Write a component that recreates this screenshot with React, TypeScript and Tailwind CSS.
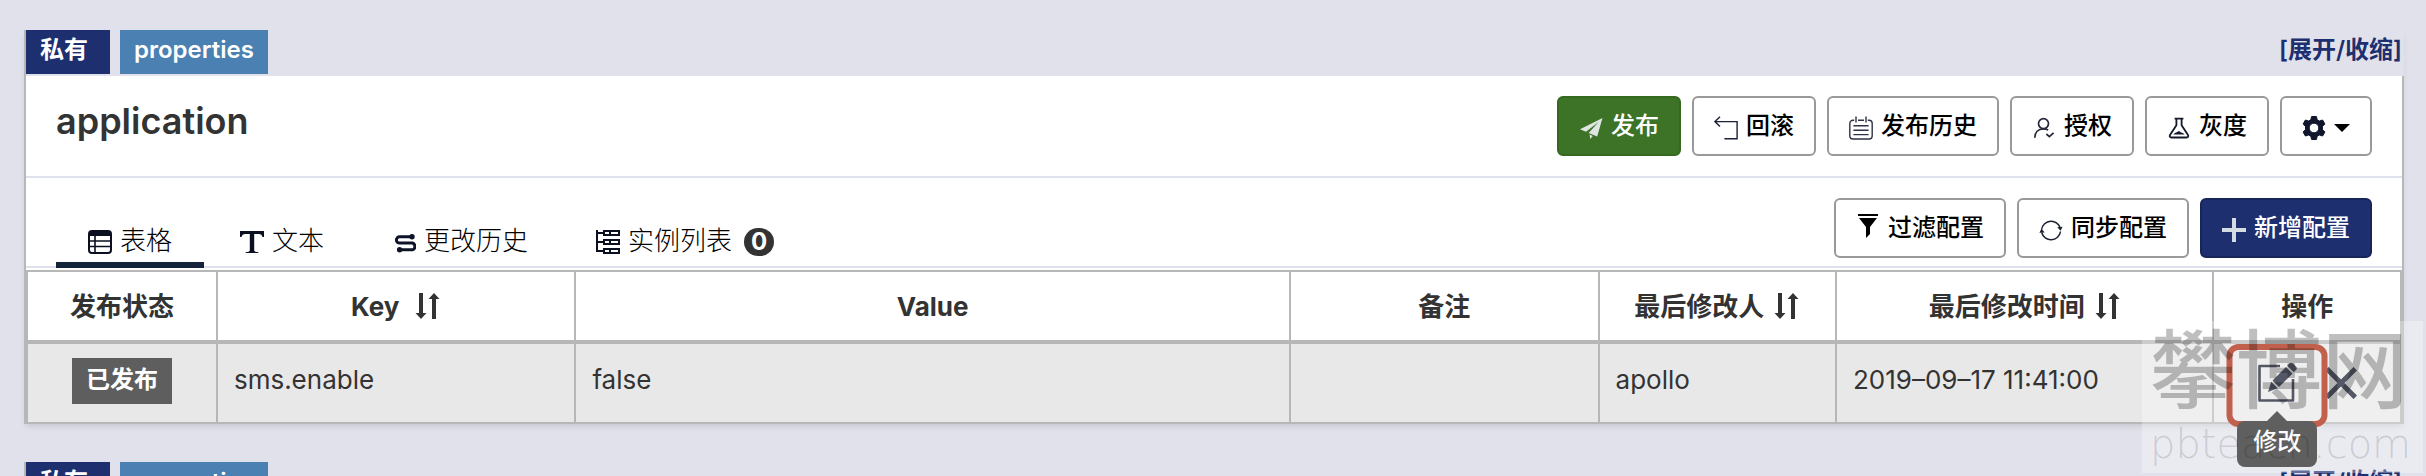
import React from "react";

const cjk = "font-['Inter','Noto_Sans_CJK_SC',sans-serif]";

const PlaneIcon = () => (
  <svg viewBox="0 0 24 24" className="mt-1 size-6" fill="#dfe6e2" aria-hidden="true">
    <path d="M23.500 2 1 13.200l6 2.600L19.600 6 9.600 17l8.600 3.600z" />
    <path d="m10.600 18.600 3.200 1.300-2.600 3z" />
  </svg>
);

const BackIcon = () => (
  <svg viewBox="0 0 24 24" className="mt-1 size-6" fill="none" stroke="#1b2138" strokeWidth="1.400" aria-hidden="true">
    <path d="M6 .8.9 5.600 6 10.400M.9 5.600h22.200v17.200H10.400" />
  </svg>
);

const NotesIcon = () => (
  <svg viewBox="0 0 24 24" className="mt-1 size-6" fill="none" stroke="#2c3145" strokeWidth="1.400" aria-hidden="true">
    <path d="M5.200 4.200H4A3.200 3.200 0 0 0 .8 7.400v12.400A3.200 3.200 0 0 0 4 23h16a3.200 3.200 0 0 0 3.200-3.200V7.400A3.200 3.200 0 0 0 20 4.200h-1.200M9 4.200h6M7 .6v6M17 .6v6M4.400 9.800h15.200M4.400 14.200h15.200M4.400 18.600h15.200" />
  </svg>
);

const UserIcon = () => (
  <svg viewBox="0 0 24 24" className="mt-1 size-6" fill="none" stroke="#23283a" strokeWidth="1.700" aria-hidden="true">
    <circle cx="11.500" cy="7.600" r="5" />
    <path d="M2.800 21.800c0-5.400 3.200-9 8.700-9 1.800 0 3.300.3 4.600 1.200M14.400 18l3 2.700 4.200-3.800" />
  </svg>
);

const FlaskIcon = () => (
  <svg viewBox="0 0 24 24" className="mt-1 size-6" fill="none" stroke="#14192b" strokeWidth="1.800" aria-hidden="true">
    <path d="M7.600 2.600h8.800M9.400 2.600v6.600L3 19c-.8 1.400 0 2.500 1.400 2.500h15.200c1.400 0 2.200-1.100 1.400-2.500L14.600 9.200V2.600" />
    <path d="M6.400 18.600c1-1.800 3-2.300 4.600-3.200 1.400-.6 2.200.2 3 1 1.600.3 2.800.9 3.600 2.200z" fill="#14192b" stroke="none" />
  </svg>
);

const GearIcon = () => (
  <svg viewBox="0 0 24 24" className="mt-1 size-6" fill="#10162c" stroke="#10162c" strokeLinejoin="round" aria-hidden="true">
    <path
      fillRule="evenodd"
      d="M9.600.5h4.800l.8 3.300 2.200 1.200 3.200-1 2.300 4-2.400 2.400v3.200l2.400 2.400-2.300 4-3.200-1-2.200 1.200-.8 3.300H9.600l-.8-3.300-2.200-1.200-3.200 1-2.300-4 2.400-2.400v-3.200L1.100 8l2.300-4 3.200 1 2.200-1.200zM12 7.200a4.800 4.800 0 1 0 0 9.600 4.800 4.800 0 0 0 0-9.600z"
    />
  </svg>
);

const FilterIcon = () => (
  <svg viewBox="0 0 24 24" className="mb-1 size-6" fill="#000" aria-hidden="true">
    <path d="M2 0h20v2H2zM3 4h18l-7 9v7l-4 4V13z" />
  </svg>
);

const SyncIcon = () => (
  <svg viewBox="0 0 24 24" className="mt-1 size-6" fill="none" stroke="#1b2033" strokeWidth="1.500" aria-hidden="true">
    <path d="M2.600 11.500a9.600 9.600 0 0 1 18.800-1M21.500 13.500a9.600 9.600 0 0 1-18.800 1" />
    <path d="m18.200 9.200 5.400-.4-2 4zM5.800 14.400l-5.400.4 2-4z" fill="#1b2033" stroke="none" />
  </svg>
);

const PlusIcon = () => (
  <svg viewBox="0 0 24 24" className="mt-1 size-6" fill="none" stroke="#d5dbe2" strokeWidth="4" aria-hidden="true">
    <path d="M12 0v24M0 12h24" />
  </svg>
);

const TableIcon = () => (
  <svg viewBox="0 0 24 24" className="size-6" fill="none" stroke="#0b1020" aria-hidden="true">
    <rect x="1" y="1" width="22" height="22" rx="3" strokeWidth="2" />
    <path d="M1 4a3 3 0 0 1 3-3h16a3 3 0 0 1 3 3v2H1z" fill="#0b1020" stroke="none" />
    <path d="M7 6v17M1 11h22M1 16.500h22" strokeWidth="1.600" />
  </svg>
);

const TextIcon = () => (
  <svg viewBox="0 0 24 24" className="size-6" fill="#0b1020" aria-hidden="true">
    <path d="M0 1h24v6h-1.600c-.6-2.200-1.400-3-3.600-3h-4.600v16c0 1.600.8 2 4.200 2.200V23H5.600v-.8c3.400-.2 4.200-.6 4.200-2.200V4H5.200c-2.200 0-3 .8-3.600 3H0z" />
  </svg>
);

const RouteIcon = () => (
  <svg viewBox="0 0 24 24" className="size-6" fill="none" stroke="#0e1428" strokeWidth="3" aria-hidden="true">
    <path d="M20 6.800H7.500a3 3 0 0 0 0 6.200h13a3.600 3.600 0 0 1 0 6.800H8" />
    <circle cx="20" cy="6.800" r="1.500" fill="#0e1428" strokeWidth="2.400" />
    <circle cx="7.600" cy="19.800" r="1.500" fill="#0e1428" strokeWidth="2.400" />
  </svg>
);

const TreeIcon = () => (
  <svg viewBox="0 0 24 24" className="size-6" fill="none" stroke="#0b1020" strokeWidth="2" aria-hidden="true">
    <path d="M1 0v22M1 3h7M1 12h7M1 21h7M8 1h15v4H8zM8 10h15v4H8zM8 19h15v4H8zM14 1v4M14 10v4M14 19v4" />
  </svg>
);

const SortIcon = () => (
  <svg viewBox="0 0 26 26" className="size-[26px]" fill="#333" aria-hidden="true">
    <path d="M4 0h4v20h3.500L6 26 .5 20H4zM17 26h4V6h3.500L19 0l-5.500 6H17z" />
  </svg>
);

const EditIcon = () => (
  <svg viewBox="0 0 40 40" className="size-10" fill="none" stroke="#0b1024" aria-hidden="true">
    <path d="M23 3H2.500v34.500h33.500V16" strokeWidth="2.600" strokeLinejoin="round" />
    <path
      d="m15.500 17.500 13.500-13.500 6.500 6.500L22 24zM30.200 2.800 32.500.5c1-1 2.400-1 3.400 0l3.100 3.100c1 1 1 2.400 0 3.400l-2.300 2.300zM14.200 18.800l6.500 6.500L11 29z"
      fill="#0b1024"
      stroke="none"
    />
  </svg>
);

const CloseIcon = () => (
  <svg viewBox="0 0 32 32" className="size-8" fill="none" stroke="#0b1024" strokeWidth="5" aria-hidden="true">
    <path d="m1.700 1.700 28.600 28.600M30.300 1.700 1.700 30.300" />
  </svg>
);

function ToolButton({
  icon,
  label,
  tone = "plain",
}: {
  icon: React.ReactNode;
  label: string;
  tone?: "plain" | "green" | "navy";
}) {
  const tones = {
    plain: "border-[#999] bg-white text-black",
    green: "border-[#34691f] bg-[#3c7326] text-white",
    navy: "border-[#172558] bg-[#1d2f6f] text-white",
  };
  return (
    <button
      type="button"
      className={`flex h-[60px] items-center gap-2 rounded-md border-2 px-5 text-2xl font-medium whitespace-nowrap ${tones[tone]}`}
    >
      {icon}
      <span>{label}</span>
    </button>
  );
}

function Tab({
  icon,
  label,
  active = false,
  count,
}: {
  icon: React.ReactNode;
  label: string;
  active?: boolean;
  count?: number;
}) {
  return (
    <button
      type="button"
      role="tab"
      aria-selected={active}
      className={`flex h-14 items-center gap-2 px-8 pt-1 text-[26px] font-light whitespace-nowrap text-black ${
        active ? "bg-[linear-gradient(#13233a,#13233a)] bg-[length:100%_6px] bg-bottom bg-no-repeat" : ""
      }`}
    >
      {icon}
      <span className="pb-1">{label}</span>
      {count !== undefined && (
        <span className="ml-1 flex h-7 w-[30px] items-center justify-center rounded-full bg-[#333] text-2xl font-bold text-white">
          {count}
        </span>
      )}
    </button>
  );
}

function NamespaceHead() {
  return (
    <div className="-mr-0.5 flex h-[46px] items-start justify-between bg-[#e1e1eb] pr-0.5">
      <div className="flex gap-[10px] text-2xl font-semibold text-white">
        <span className="flex h-11 w-[84px] items-center bg-[#1d2f6f] pb-1 pl-[14px]">私有</span>
        <span className="flex h-11 items-center bg-[#4a80b2] px-[14px] pb-1">properties</span>
      </div>
      <a href="#toggle" className="flex h-11 items-center pb-1 text-2xl font-semibold text-[#1d2f6f]">
        [展开/收缩]
      </a>
    </div>
  );
}

function Watermark() {
  return (
    <div
      aria-hidden="true"
      className="pointer-events-none absolute right-[3px] bottom-[3px] flex h-[152px] w-[281px] flex-col bg-white/30 pl-2 text-black/25"
    >
      <span className="text-[86px] leading-[100px] font-medium whitespace-nowrap">攀博网</span>
      <span className="font-['DejaVu_Sans',sans-serif] text-[40px] leading-[46px] font-light text-black/15">
        pbteach.com
      </span>
    </div>
  );
}

const cell = "border-2 border-[#b7b7b7] px-4";

export default function App() {
  return (
    <main
      className={`relative h-screen min-h-[476px] overflow-hidden bg-[#e1e1eb] pt-[30px] pr-[22px] pl-6 text-[#333] ${cjk}`}
    >
      <section className="border-x-2 border-[#b7b7b7] bg-white shadow-[0_4px_6px_-2px_rgba(0,0,0,0.12)]">
        <NamespaceHead />
        <header className="flex h-[102px] items-start justify-between border-b-2 border-[#dfe2ec] px-[30px] pt-5">
          <h2 className="text-[36px] leading-[50px] font-semibold">application</h2>
          <div className="flex gap-[11px]">
            <ToolButton icon={<PlaneIcon />} label="发布" tone="green" />
            <ToolButton icon={<BackIcon />} label="回滚" />
            <ToolButton icon={<NotesIcon />} label="发布历史" />
            <ToolButton icon={<UserIcon />} label="授权" />
            <ToolButton icon={<FlaskIcon />} label="灰度" />
            <button
              type="button"
              aria-label="设置"
              className="flex h-[60px] items-center gap-2 rounded-md border-2 border-[#999] bg-white px-5"
            >
              <GearIcon />
              <svg viewBox="0 0 16 8" className="mt-1 h-2 w-4" fill="#000" aria-hidden="true">
                <path d="M0 0h16L8 8z" />
              </svg>
            </button>
          </div>
        </header>
        <div className="flex h-[90px] items-end justify-between border-b-2 border-[#dfe2ec] px-[30px]">
          <div role="tablist" className="-mb-0.5 flex gap-1">
            <Tab icon={<TableIcon />} label="表格" active />
            <Tab icon={<TextIcon />} label="文本" />
            <Tab icon={<RouteIcon />} label="更改历史" />
            <Tab icon={<TreeIcon />} label="实例列表" count={0} />
          </div>
          <div className="flex gap-[11px] pb-2">
            <ToolButton icon={<FilterIcon />} label="过滤配置" />
            <ToolButton icon={<SyncIcon />} label="同步配置" />
            <ToolButton icon={<PlusIcon />} label="新增配置" tone="navy" />
          </div>
        </div>
        <table className="mt-0.5 w-full table-fixed border-collapse text-[26px]">
          <colgroup>
            <col className="w-[8%]" />
            <col className="w-[15.1%]" />
            <col className="w-[30.1%]" />
            <col className="w-[13%]" />
            <col className="w-[10%]" />
            <col className="w-[15.9%]" />
            <col className="w-[7.9%]" />
          </colgroup>
          <thead>
            <tr className="h-[71px]">
              <th className={cell}>发布状态</th>
              <th className={cell}>
                <span className="flex items-center justify-center gap-4">
                  Key <SortIcon />
                </span>
              </th>
              <th className={cell}>Value</th>
              <th className={cell}>备注</th>
              <th className={cell}>
                <span className="flex items-center justify-center gap-2.5 whitespace-nowrap">
                  最后修改人 <SortIcon />
                </span>
              </th>
              <th className={cell}>
                <span className="flex items-center justify-center gap-2.5 whitespace-nowrap">
                  最后修改时间 <SortIcon />
                </span>
              </th>
              <th className={cell}>操作</th>
            </tr>
          </thead>
          <tbody>
            <tr className="h-[81px] border-t-4 border-[#b7b7b7] bg-[#e8e8e8]">
              <td className={`${cell} pb-1 text-center`}>
                <span className="inline-flex h-[46px] items-center bg-[#5e5e5e] px-[14px] pb-0.5 text-2xl font-semibold whitespace-nowrap text-white">
                  已发布
                </span>
              </td>
              <td className={`${cell} pb-2`}>sms.enable</td>
              <td className={`${cell} pb-2`}>false</td>
              <td className={cell} />
              <td className={`${cell} pb-2`}>apollo</td>
              <td className={`${cell} pb-2 whitespace-nowrap`}>2019–09–17 11:41:00</td>
              <td className={cell}>
                <div className="flex items-center justify-center gap-7">
                  <button type="button" aria-label="修改" className="relative flex">
                    <EditIcon />
                    <span className="absolute -top-[19px] left-1/2 h-[83px] w-[101px] -translate-x-1/2 rounded-xl border-6 border-[#a51c00]" />
                    <span className="absolute top-12 left-1/2 flex -translate-x-1/2 flex-col items-center">
                      <svg viewBox="0 0 20 10" className="h-[10px] w-5" fill="#1a1a1a" aria-hidden="true">
                        <path d="M10 0 20 10H0z" />
                      </svg>
                      <span className="flex h-[46px] w-20 items-center justify-center rounded-lg bg-[#1a1a1a] pb-1 text-2xl font-medium text-white">
                        修改
                      </span>
                    </span>
                  </button>
                  <button type="button" aria-label="删除" className="flex">
                    <CloseIcon />
                  </button>
                </div>
              </td>
            </tr>
          </tbody>
        </table>
      </section>
      <section className="mt-[38px] border-x-2 border-[#b7b7b7] bg-white">
        <NamespaceHead />
      </section>
      <Watermark />
    </main>
  );
}
